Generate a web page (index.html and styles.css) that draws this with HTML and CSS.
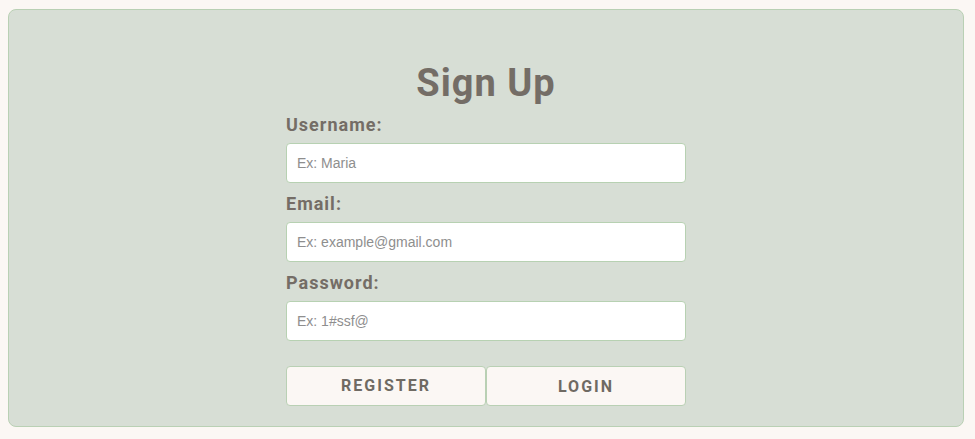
FILE: index.html
```html
<!DOCTYPE html>
<html lang="en">
<head>
<meta charset="utf-8">
<title>Sign Up</title>
<link rel="stylesheet" href="styles.css">
</head>
<body>
<main class="card">
  <form class="signup">
    <h1 class="title">Sign Up</h1>
    <div class="field">
      <label class="label" for="username">Username:</label>
      <input class="input" id="username" type="text" placeholder="Ex: Maria">
    </div>
    <div class="field">
      <label class="label" for="email">Email:</label>
      <input class="input" id="email" type="email" placeholder="Ex: example@gmail.com">
    </div>
    <div class="field">
      <label class="label" for="password">Password:</label>
      <input class="input" id="password" type="password" placeholder="Ex: 1#ssf@">
    </div>
    <div class="actions">
      <button class="btn btn-register" type="submit">Register</button>
      <button class="btn btn-login" type="button">Login</button>
    </div>
  </form>
</main>
</body>
</html>
```
FILE: styles.css
```css
html, body {
  background: #fbf7f4;
}
body {
  margin: 9px 11px 8px 8px;
  font-family: Roboto, "Liberation Sans", Arial, sans-serif;
}
.card {
  box-sizing: border-box;
  height: 418px;
  background: #d7ded5;
  border: 1px solid #b9d0b4;
  border-radius: 8px;
  padding: 51px 0 20px;
  display: flex;
  justify-content: center;
}
.signup {
  width: 400px;
  display: flex;
  flex-direction: column;
  gap: 10px;
}
.title {
  margin: 0 0 -1px;
  font-size: 38px;
  line-height: 44px;
  font-weight: 700;
  letter-spacing: 1px;
  text-align: center;
  color: #746d66;
}
.field {
  display: flex;
  flex-direction: column;
  gap: 7px;
}
.label {
  font-size: 18px;
  line-height: 22px;
  font-weight: 700;
  letter-spacing: 1px;
  color: #746d66;
}
.input {
  box-sizing: border-box;
  height: 40px;
  width: 100%;
  margin: 0;
  padding: 0 10px;
  background: #ffffff;
  border: 1px solid #b7d1b2;
  border-radius: 4px;
  font-family: "Liberation Sans", Arial, sans-serif;
  font-size: 14px;
  color: #333;
  outline: none;
}
.input::placeholder {
  color: #8e8e8e;
}
.actions {
  display: flex;
  margin-top: 15px;
}
.btn {
  box-sizing: border-box;
  flex: 1;
  height: 40px;
  margin: 0;
  background: #fbf7f4;
  border: 1px solid #b9d0b4;
  border-radius: 4px;
  font-family: Roboto, "Liberation Sans", Arial, sans-serif;
  font-size: 16px;
  font-weight: 700;
  letter-spacing: 2px;
  text-transform: uppercase;
  color: #6f6a63;
  cursor: pointer;
}
.btn-register {
  padding: 0 0 2px;
}
.btn-login {
  padding: 1px 0 0;
}
```
